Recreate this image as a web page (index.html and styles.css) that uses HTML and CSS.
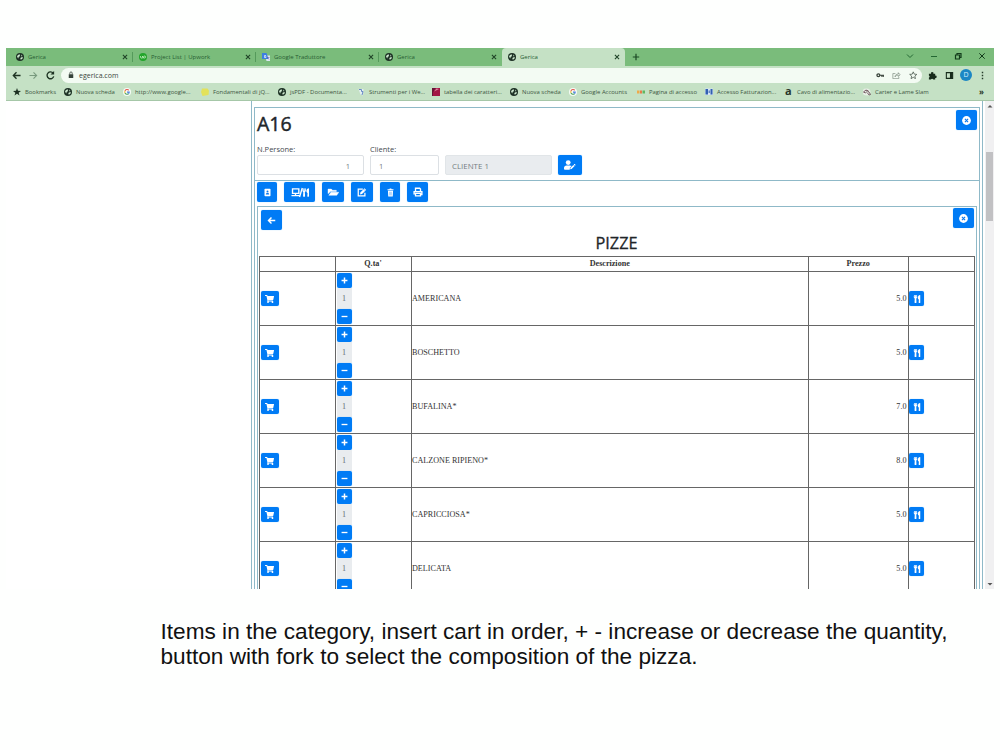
FILE: index.html
```html
<!DOCTYPE html>
<html lang="it">
<head>
<meta charset="utf-8">
<title>Gerica</title>
<link rel="stylesheet" href="styles.css">
</head>
<body>
<svg class="defs" width="0" height="0">
  <symbol id="globe" viewBox="0 0 16 16"><circle cx="8" cy="8" r="8" fill="#1d3125"/><path d="M2 7c2-4 4-4 6-4-1 2 1 3-1 4s-2 1-2 3-2-1-3-3zM9 13c0-2-1-3 1-4s3-1 4 0c-1 3-3 4-5 4zM10 3l3 3-2 1z" fill="#cde8cf"/></symbol>
  <symbol id="x" viewBox="0 0 10 10"><path d="M1.500 1.500l7 7m0-7l-7 7" stroke="#1f4227" stroke-width="1.800"/></symbol>
  <symbol id="google" viewBox="0 0 16 16"><circle cx="8" cy="8" r="8" fill="#f6fbf6"/><g fill="none" stroke-width="2.200"><path d="M4 6a4.500 4.500 0 0 1 7.500-1.500" stroke="#e25950"/><path d="M4 6a4.500 4.500 0 0 0 0 4" stroke="#edbd3a"/><path d="M4 10a4.500 4.500 0 0 0 7 1.500" stroke="#51a762"/><path d="M11 11.500c1-1 1.500-2 1.400-3.300H8" stroke="#4a7fdc"/></g></symbol>
  <symbol id="cart" viewBox="0 0 576 512"><path fill="#fff" d="M528 301l47-208c4-15-8-29-23-29H159l-9-45c-2-11-12-19-23-19H24C11 0 0 11 0 24v16c0 13 11 24 24 24h70l70 343a56 56 0 1 0 67 9h210a56 56 0 1 0 64-10l5-25c4-15-8-29-23-29H218l-6-32h293c11 0 21-8 23-19z"/></symbol>
  <symbol id="fork" viewBox="0 0 416 512"><path fill="#fff" d="M208 15c1 7 16 88 16 119 0 47-25 81-62 94l11 258c1 14-10 26-24 26H75c-14 0-25-12-24-26l12-258C26 215 0 181 0 134 0 103 15 22 16 15 19-5 61-5 64 16v127c1 4 15 4 16 0C81 129 88 23 88 16c3-21 45-21 48 0 0 8 8 113 8 127 1 4 15 4 16 0V16c4-21 45-21 48-1zm119 286l-15 185c-1 14 10 26 24 26h56c13 0 24-11 24-24V24c0-13-11-24-24-24-83 0-222 178-65 301z"/></symbol>
  <symbol id="plus" viewBox="0 0 10 10"><path d="M5 .8v8.400M.8 5h8.400" stroke="#fff" stroke-width="2.100"/></symbol>
  <symbol id="minus" viewBox="0 0 10 10"><path d="M.8 5h8.400" stroke="#fff" stroke-width="1.900"/></symbol>
  <symbol id="close" viewBox="0 0 16 16"><circle cx="8" cy="8" r="7.800" fill="#fff"/><path d="M5.200 5.200l5.600 5.600m0-5.600l-5.600 5.600" stroke="#0878ee" stroke-width="2"/></symbol>
</svg>

<main class="browser">
  <header class="tabs">
    <div class="tab"><svg><use href="#globe"/></svg><span>Gerica</span><svg class="x"><use href="#x"/></svg></div>
    <div class="tab"><svg viewBox="0 0 16 16"><circle cx="8" cy="8" r="8" fill="#23a52b"/><path d="M3 6v2c0 3 4 3 4 0V6c1 3 3 4 4 4 3 0 3-4 0-4-2 0-2 3-3 5" fill="none" stroke="#c9f1c6" stroke-width="1.500"/></svg><span>Project List | Upwork</span><svg class="x"><use href="#x"/></svg></div>
    <div class="tab"><svg viewBox="0 0 16 16"><path d="M6 5h10v11H9z" fill="#dce7f3"/><path d="M0 0h9l4 12H0z" fill="#3d7fe0"/><path d="M8 5H5v4h3V7H7" fill="none" stroke="#fff" stroke-width="1.300"/><path d="M10 9h5m-3 0c0 2 1 3 2 4" fill="none" stroke="#658" stroke-width="1"/></svg><span>Google Traduttore</span><svg class="x"><use href="#x"/></svg></div>
    <div class="tab last"><svg><use href="#globe"/></svg><span>Gerica</span><svg class="x"><use href="#x"/></svg></div>
    <div class="tab active"><svg><use href="#globe"/></svg><span>Gerica</span><svg class="x"><use href="#x"/></svg></div>
    <svg class="new" viewBox="0 0 10 10"><path d="M5 1v8M1 5h8" stroke="#1b4824" stroke-width="1.500"/></svg>
    <div class="window-controls">
      <svg viewBox="0 0 8 8"><path d="M1 2.500l3 3 3-3" fill="none" stroke="#246733"/></svg>
      <svg viewBox="0 0 8 8"><path d="M1 4.500h6" stroke="#246733"/></svg>
      <svg viewBox="0 0 8 8"><path d="M1.500 3h4v4h-4zM3 3V1.500h4v4H5.500" fill="none" stroke="#123b1b" stroke-width="1.200"/></svg>
      <svg viewBox="0 0 8 8"><path d="M1.300 1.300l5.400 5.400m0-5.400L1.300 6.700" stroke="#123b1b"/></svg>
    </div>
  </header>

  <nav class="address">
    <svg viewBox="0 0 10 10"><path d="M9.500 5H1.500M5 1.500L1.500 5 5 8.500" fill="none" stroke="#1d3322" stroke-width="1.500"/></svg>
    <svg viewBox="0 0 10 10"><path d="M.5 5h8M5 1.500L8.500 5 5 8.500" fill="none" stroke="#789a7e" stroke-width="1.200"/></svg>
    <svg viewBox="0 0 10 10"><path d="M8 2.500A3.800 3.800 0 1 0 8.600 6" fill="none" stroke="#1d3322" stroke-width="1.500"/><path d="M9 0v4H5z" fill="#1d3322"/></svg>
    <div class="url">
      <svg class="lock" viewBox="0 0 8 10"><path d="M1 4h6v5H1z" fill="#35423a"/><path d="M2.400 4V2.500a1.600 1.600 0 0 1 3.200 0V4" fill="none" stroke="#35423a"/></svg>
      <span>egerica.com</span>
      <div class="url-icons">
        <svg viewBox="0 0 10 10"><circle cx="2.800" cy="5" r="1.700" fill="none" stroke="#3a443c" stroke-width="1.500"/><path d="M4.500 5H9.500M8.500 5v2M6.800 5v1.700" stroke="#3a443c" stroke-width="1.400"/></svg>
        <svg viewBox="0 0 10 10"><path d="M4 3H1v6h7V7M3.500 7c0-2 1.500-3.500 4-3.500V2L9.500 4.500 7.500 6.500V5C5.500 5 4.500 5.500 3.500 7z" fill="none" stroke="#7b897e" stroke-width=".8"/></svg>
        <svg viewBox="0 0 10 10"><path d="M5 1l1.200 2.700 3 .3-2.300 2 .7 3L5 7.400 2.400 9l.7-3L.8 4l3-.3z" fill="none" stroke="#465449" stroke-width=".9"/></svg>
      </div>
    </div>
    <svg class="ext" viewBox="0 0 10 10"><path d="M1 3h2.400a1.400 1.400 0 1 1 2.600 0h2v2.200a1.300 1.300 0 1 1 0 2.500V9.500H5.800a1.300 1.300 0 0 0-2.500 0H1V7.300a1.300 1.300 0 0 0 0-2.400z" fill="#162b1b"/></svg>
    <svg class="side" viewBox="0 0 10 10"><path d="M1.500 1.800h7v6.400h-7z" fill="none" stroke="#162b1b" stroke-width="1.200"/><path d="M5.500 2h3v6h-3z" fill="#162b1b"/></svg>
    <span class="avatar">D</span>
    <svg class="dots" viewBox="0 0 10 10"><path d="M4.200 .8h1.600v1.600H4.200zM4.200 4.200h1.600v1.600H4.200zM4.200 7.600h1.600v1.600H4.200z" fill="#263c2b"/></svg>
  </nav>

  <nav class="bookmarks">
    <a><svg viewBox="0 0 16 16"><path d="M8 0l2 5.500 6 .3-4.700 3.600L13 15l-5-3.300L3 15l1.700-5.600L0 5.800l6-.3z" fill="#1d3022"/></svg>Bookmarks</a>
    <a><svg><use href="#globe"/></svg>Nuova scheda</a>
    <a><svg><use href="#google"/></svg>http://www.google...</a>
    <a><svg viewBox="0 0 16 16"><path d="M2 1h11l3 4-1 9-12 2-3-8z" fill="#e3e25b"/></svg>Fondamentali di jQ...</a>
    <a><svg><use href="#globe"/></svg>jsPDF - Documenta...</a>
    <a><svg viewBox="0 0 16 16"><path d="M3 2h10l-1 13-5-2z" fill="#e3f0f2"/><path d="M4 3h5v4h3l-2 7" fill="none" stroke="#6789c5" stroke-width="2"/></svg>Strumenti per i We...</a>
    <a><svg viewBox="0 0 16 16"><path d="M0 0h16v16H0z" fill="#a21645"/><path d="M0 0h7L2 9v7H0z" fill="#671537"/><path d="M4 7l5-6 5 1z" fill="#db87a1"/></svg>tabella dei caratteri...</a>
    <a><svg><use href="#globe"/></svg>Nuova scheda</a>
    <a><svg><use href="#google"/></svg>Google Accounts</a>
    <a><svg viewBox="0 0 16 16"><path d="M0 5h5v6H0z" fill="#efaa4a"/><path d="M6 5h4v6H6z" fill="#e97b4b"/><path d="M11 5h5v6h-5z" fill="#60b862"/></svg>Pagina di accesso</a>
    <a><svg viewBox="0 0 16 16"><path d="M0 1h16v13H0z" fill="#d5e5f5"/><path d="M1 2h5v11H1zM11 2h4v11h-4z" fill="#3260b1"/><path d="M7 5h3v5H7z" fill="#678ac7"/></svg>Accesso Fatturazion...</a>
    <a><b class="logo-a">a</b>Cavo di alimentazio...</a>
    <a><svg viewBox="0 0 16 16"><ellipse cx="7" cy="8" rx="8" ry="7" fill="#e8efe6"/><path d="M1 8l5-4 2 3-3 3zm6-4l4 2-1 3m-1 1l3 4 3-1-3-5" fill="none" stroke="#6b5159" stroke-width="1.800"/></svg>Carter e Lame Slam</a>
    <b class="more">»</b>
  </nav>

  <div class="viewport">
    <div class="page">
      <section class="order">
        <div class="order-head">
          <div class="title-row"><h1>A16</h1><button class="btn"><svg><use href="#close"/></svg></button></div>
          <div class="fields">
            <label class="people">N.Persone:<span class="field num">1</span></label>
            <label class="client">Cliente:<span class="field">1</span></label>
            <span class="field disabled">CLIENTE 1</span>
            <button class="btn user"><svg viewBox="0 0 640 512"><circle cx="224" cy="128" r="128" fill="#fff"/><path d="M0 420c0-90 60-140 134-140h180c40 0 70 15 90 35l-88 90-12 107H48c-26 0-48-20-48-44zm340-10l160-160 65 65-160 160-75 10zm180-180l24-24c10-10 25-10 35 0l30 30c10 10 10 25 0 35l-24 24z" fill="#fff"/></svg></button>
          </div>
        </div>
        <div class="toolbar">
          <button class="btn b1"><svg viewBox="0 0 10 12"><rect x="1" y="1" width="8" height="10" rx="1" fill="#fff"/><circle cx="5" cy="4.500" r="1.300" fill="#0878ee"/><path d="M2.800 8.500c0-3 4.400-3 4.400 0z" fill="#0878ee"/></svg></button>
          <button class="btn b2"><svg viewBox="0 0 20 12"><path d="M1.700 2h7v5h-7zM.5 9.500h9M5 7v2.500M9.500 11L12.500 1" fill="none" stroke="#fff" stroke-width="1.500"/><use href="#fork" x="12.500" y="1" width="7.500" height="10"/></svg></button>
          <button class="btn b3"><svg viewBox="0 0 14 12"><path d="M1 8V2.500h4L6.500 4H11v1.500H4zM4.500 6.300H14L11.500 10H2z" fill="#fff" stroke="#fff" stroke-width=".5"/></svg></button>
          <button class="btn b4"><svg viewBox="0 0 12 12"><path d="M7 2.500H1.500v8h8V7" fill="none" stroke="#fff" stroke-width="1.500"/><path d="M4 6.500L9 1.500 11 3.500 6 8.500 3.700 9z" fill="#fff"/><path d="M8 2.500l2 2" stroke="#0878ee" stroke-width=".6"/></svg></button>
          <button class="btn b5"><svg viewBox="0 0 12 12"><path d="M2 1.500h2.500L5 .7h2l.5.800H10V3H2zM2.600 3.800h6.800L9 11.300H3z" fill="#fff"/><path d="M4.700 5v5M6 5v5M7.300 5v5" stroke="#0878ee" stroke-width=".4"/></svg></button>
          <button class="btn b6"><svg viewBox="0 0 12 12"><path d="M3 5V1.500h5L9 2.500V5M1.300 9V5.500h9.400V9H9M3 7.700h6v3H3z" fill="none" stroke="#fff" stroke-width="1.600"/></svg></button>
        </div>
        <section class="category">
          <div class="category-head">
            <button class="btn back"><svg viewBox="0 0 12 12"><path d="M11 6H2M6 2L2 6l4 4" fill="none" stroke="#fff" stroke-width="1.900"/></svg></button>
            <button class="btn"><svg><use href="#close"/></svg></button>
          </div>
          <h2>PIZZE</h2>
          <table>
            <colgroup><col class="c-cart"><col class="c-qty"><col class="c-desc"><col class="c-price"><col class="c-fork"></colgroup>
            <thead><tr><th></th><th>Q.ta'</th><th>Descrizione</th><th>Prezzo</th><th></th></tr></thead>
            <tbody>
              <tr><td><button class="btn cart"><svg><use href="#cart"/></svg></button></td><td><div class="qty"><button class="btn"><svg><use href="#plus"/></svg></button><span>1</span><button class="btn"><svg><use href="#minus"/></svg></button></div></td><td>AMERICANA</td><td class="price">5.0</td><td><button class="btn fork"><svg><use href="#fork"/></svg></button></td></tr>
              <tr><td><button class="btn cart"><svg><use href="#cart"/></svg></button></td><td><div class="qty"><button class="btn"><svg><use href="#plus"/></svg></button><span>1</span><button class="btn"><svg><use href="#minus"/></svg></button></div></td><td>BOSCHETTO</td><td class="price">5.0</td><td><button class="btn fork"><svg><use href="#fork"/></svg></button></td></tr>
              <tr><td><button class="btn cart"><svg><use href="#cart"/></svg></button></td><td><div class="qty"><button class="btn"><svg><use href="#plus"/></svg></button><span>1</span><button class="btn"><svg><use href="#minus"/></svg></button></div></td><td>BUFALINA*</td><td class="price">7.0</td><td><button class="btn fork"><svg><use href="#fork"/></svg></button></td></tr>
              <tr><td><button class="btn cart"><svg><use href="#cart"/></svg></button></td><td><div class="qty"><button class="btn"><svg><use href="#plus"/></svg></button><span>1</span><button class="btn"><svg><use href="#minus"/></svg></button></div></td><td>CALZONE RIPIENO*</td><td class="price">8.0</td><td><button class="btn fork"><svg><use href="#fork"/></svg></button></td></tr>
              <tr><td><button class="btn cart"><svg><use href="#cart"/></svg></button></td><td><div class="qty"><button class="btn"><svg><use href="#plus"/></svg></button><span>1</span><button class="btn"><svg><use href="#minus"/></svg></button></div></td><td>CAPRICCIOSA*</td><td class="price">5.0</td><td><button class="btn fork"><svg><use href="#fork"/></svg></button></td></tr>
              <tr><td><button class="btn cart"><svg><use href="#cart"/></svg></button></td><td><div class="qty"><button class="btn"><svg><use href="#plus"/></svg></button><span>1</span><button class="btn"><svg><use href="#minus"/></svg></button></div></td><td>DELICATA</td><td class="price">5.0</td><td><button class="btn fork"><svg><use href="#fork"/></svg></button></td></tr>
            </tbody>
          </table>
        </section>
      </section>
    </div>
    <div class="scrollbar">
      <svg viewBox="0 0 8 8"><path d="M1.500 5.500L4 3l2.500 2.500z" fill="#555"/></svg>
      <div class="thumb"></div>
      <svg viewBox="0 0 8 8"><path d="M1.500 3L4 5.500 6.500 3z" fill="#555"/></svg>
    </div>
  </div>
</main>

<p class="caption">Items in the category, insert cart in order, + - increase or decrease the quantity,<br>button with fork to select the composition of the pizza.</p>
</body>
</html>
```
FILE: styles.css
```css
* { box-sizing: border-box; }
body { margin: 0; padding: 48px 6px 0; height: 750px; overflow: hidden; background: #fefffe; color: #212529; font-family: "Open Sans", "Noto Sans", sans-serif; }
.defs { display: none; }
svg { display: block; flex: none; }
h1, h2, p { margin: 0; font-weight: 400; }

.browser { width: 988px; height: 541px; display: flex; flex-direction: column; overflow: hidden; }

.tabs { height: 18px; flex: none; display: flex; align-items: center; padding-left: 4px; background: #7abc7b; font-size: 6px; color: #285c33; }
.tab { width: 123px; height: 18px; display: flex; align-items: center; padding: 0 5px 0 6px; position: relative; }
.tab svg { width: 8px; height: 8px; }
.tab span { flex: 1; padding-left: 4px; }
.tab .x { width: 6px; height: 6px; }
.tab:not(.last):not(.active)::after { content: ""; position: absolute; right: 0; top: 4px; height: 10px; width: 1px; background: #559a5b; }
.active { background: #c5e1c5; border-radius: 4px 4px 0 0; }
.new { width: 8px; height: 8px; margin-left: 7px; }
.window-controls { margin-left: auto; display: flex; gap: 16px; padding: 0 8px 3px 0; }
.window-controls svg { width: 8px; height: 8px; }

.address { height: 18px; flex: none; display: flex; align-items: center; background: #c5e1c5; padding-left: 6px; }
.address > svg { width: 9px; height: 9px; margin-right: 8px; }
.url { width: 861px; height: 15px; border-radius: 8px; background: #f3fbf3; display: flex; align-items: center; padding: 0 5px 0 7px; font-size: 7px; color: #3a463d; margin-left: -2px; }
.lock { width: 6px; height: 8px; margin-right: 5px; }
.url-icons { margin-left: auto; display: flex; gap: 8px; }
.url-icons svg { width: 8.500px; height: 8.500px; }
.address .ext { margin: 0 8px 0 6px; }
.address .side { margin: 0 6px 0 0; }
.avatar { width: 12px; height: 12px; border-radius: 50%; background: #1b87c4; color: #d5efff; font-size: 7px; line-height: 12px; text-align: center; }
.address .dots { margin: 0 0 0 6px; }

.bookmarks { height: 17px; flex: none; display: grid; grid-template-columns: 51px 59px 78px 77px 79px 75px 78px 59px 68px 68px 80px 78px 116px 10px; align-items: center; padding: 0 0 1px 7px; background: #c5e1c5; border-bottom: 1px solid #a6c7a8; font-size: 5.900px; color: #3c5541; }
.bookmarks a { display: flex; align-items: center; white-space: nowrap; }
.bookmarks svg, .logo-a { width: 8px; height: 8px; margin-right: 4px; }
.logo-a { font-size: 11px; line-height: 5px; color: #29352b; }
.more { font-size: 8px; line-height: 8px; color: #1d3322; }

.viewport { flex: 1; min-height: 0; display: flex; justify-content: space-between; overflow: hidden; background: #fff; }
.page { margin-left: 245px; width: 732px; border: solid #8fb9c8; border-width: 0 1px; padding: 6px 2px 0; }
.order { border: 1px solid #8fb9c8; height: 600px; }
.order-head { height: 73px; padding: 2px 2px 0; border-bottom: 1px solid #8fb9c8; }
.title-row { height: 33px; display: flex; justify-content: space-between; align-items: flex-start; }
.title-row h1 { font-size: 19.500px; line-height: 28px; -webkit-text-stroke: .45px #212529; }
.btn { border: 0; padding: 0; width: 21px; height: 20px; display: flex; align-items: center; justify-content: center; flex: none; background: #007bf5; border-radius: 2px; box-shadow: 0 0 1px #72c3ff; }
.btn svg { width: 9px; height: 9px; }
.fields { display: flex; align-items: flex-end; height: 32px; font-size: 7.500px; color: #444a50; }
.fields label { display: block; line-height: 11px; }
.field { display: block; height: 20px; border: 1px solid #dce0e4; border-radius: 2px; background: #fff; padding: 0 8px; line-height: 20px; color: #757c83; }
.people { width: 107px; margin-right: 6px; }
.num { text-align: right; padding-right: 13px; }
.client { width: 69px; margin-right: 6px; }
.disabled { width: 107px; margin-right: 6px; background: #e9ecef; border-color: #e1e5e8; padding-left: 6px; font-size: 7.900px; }
.user { width: 24px; }
.btn.user svg { width: 12px; height: 10px; }
.toolbar { height: 25px; display: flex; gap: 7px; padding: 1px 2px 0; }
.b1 { width: 20px; }
.b2 { width: 31px; }
.b3, .b4 { width: 22px; }
.b5 { width: 20px; }
.b6 { width: 21px; }
.b2 svg { width: 18px; height: 11px; }
.b3 svg { width: 12px; height: 10px; }
.b4 svg, .b6 svg { width: 10px; height: 10px; }

.category { margin: 0 2px; height: 500px; border: 1px solid #8fb9c8; padding: 1px 2px 0 1px; }
.category-head { display: flex; justify-content: space-between; height: 23px; padding: 0 0 0 2px; }
.back { margin-top: 2px; }
h2 { height: 25px; font-size: 16.300px; line-height: 24px; text-align: center; -webkit-text-stroke: .3px #212529; }

table { width: 715px; border-collapse: collapse; table-layout: fixed; font-family: "Liberation Serif", serif; font-size: 8.150px; color: #333; }
.c-cart { width: 75.500px; }
.c-qty { width: 76px; }
.c-desc { width: 397.500px; }
.c-price { width: 99.500px; }
.c-fork { width: 66px; }
th, td { border: 1px solid #666; padding: 0 1px; }
td:first-child, td:nth-child(3), td:last-child { padding-left: .5px; }
th { height: 15px; line-height: 10px; }
td { height: 54px; line-height: 10px; }
.price { text-align: right; }
.cart { width: 18px; height: 15px; }
.btn.cart svg { width: 9px; height: 8px; }
.fork { width: 15px; height: 15px; }
.btn.fork svg { width: 8px; height: 8px; }
.qty { display: flex; flex-direction: column; width: 15px; height: 51px; }
.qty .btn { width: 15px; height: 15px; }
.qty .btn svg { width: 7px; height: 7px; }
.qty span { flex: 1; background: #e9ecef; text-align: center; line-height: 21px; color: #666d74; }

.scrollbar { width: 9px; background: #f0f0f1; display: flex; flex-direction: column; align-items: center; padding: 1px 0; }
.scrollbar svg { width: 8px; height: 8px; }
.thumb { width: 7px; height: 69px; margin: 42px 0 auto; background: #c1c1c3; }

.caption { margin: 31px 0 0 154.500px; font-family: "Liberation Sans", Arial, sans-serif; font-size: 22.630px; line-height: 24.600px; color: #111; white-space: nowrap; }
```
